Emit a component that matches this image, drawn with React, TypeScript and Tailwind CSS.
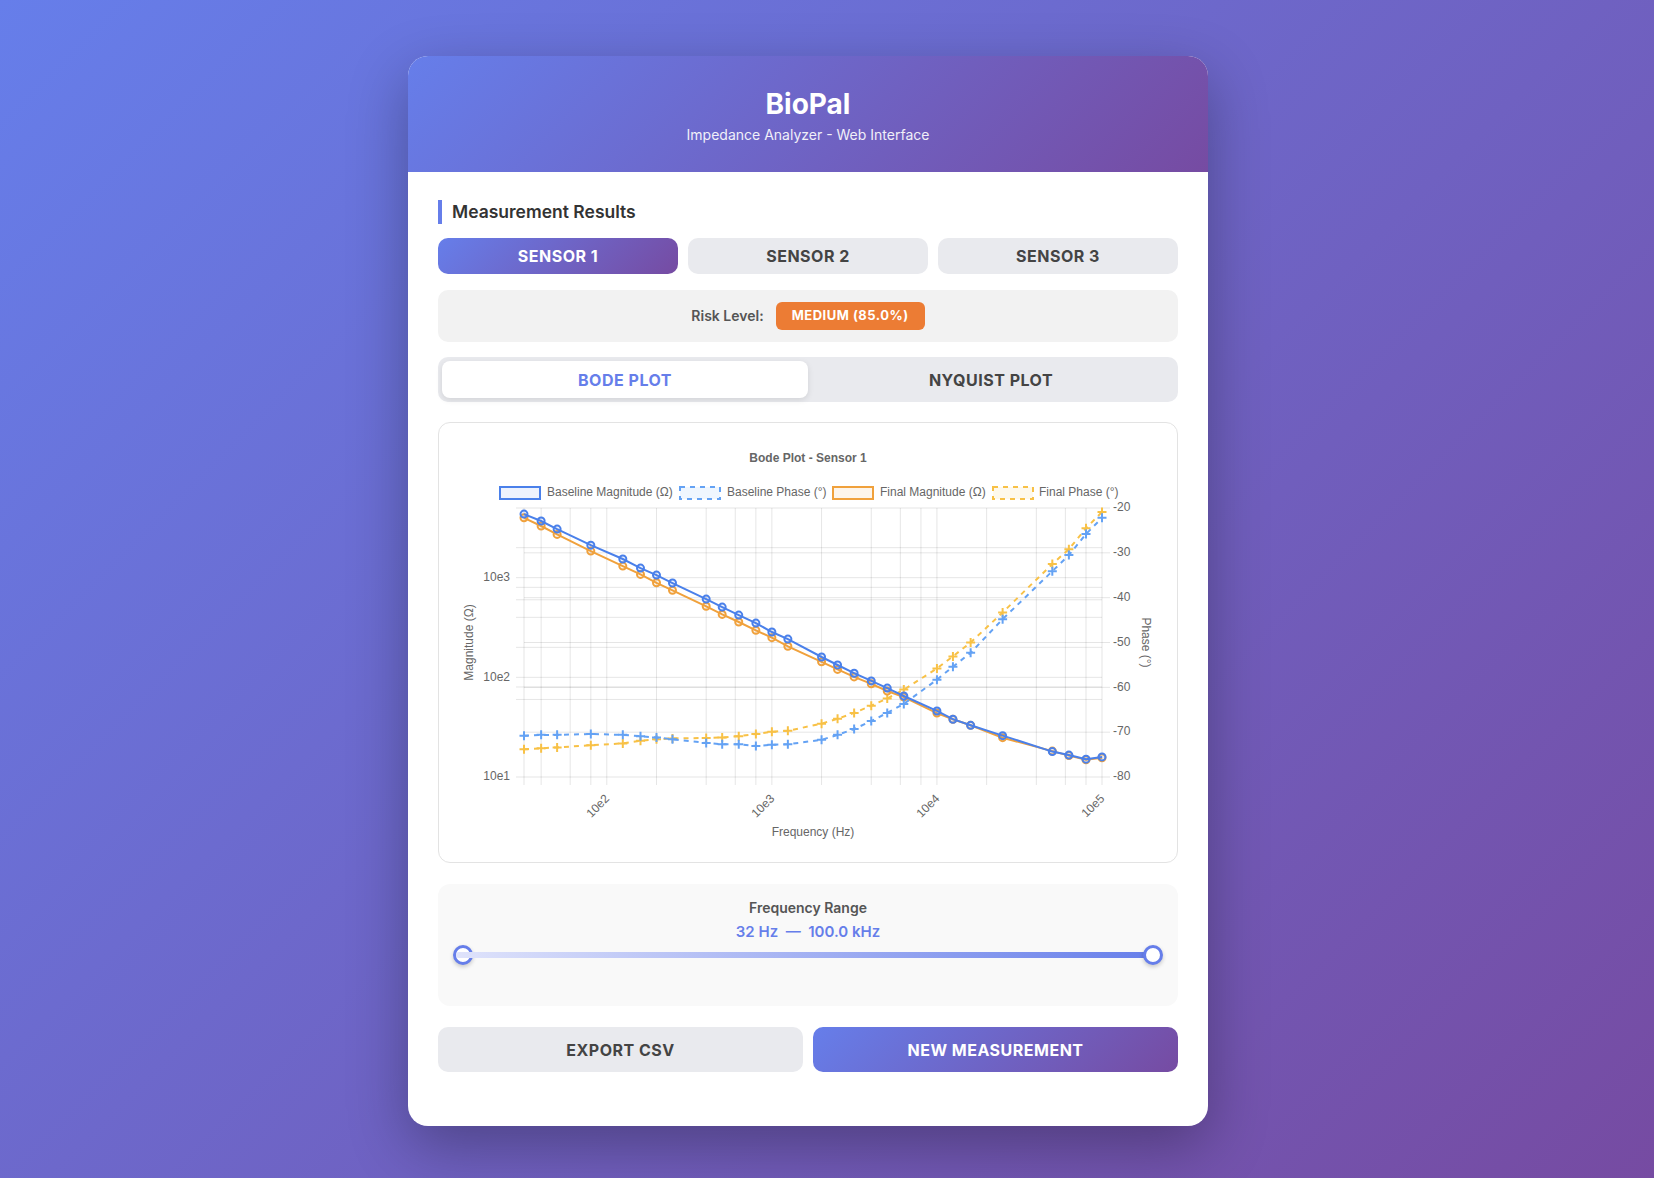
import { useState } from "react";

const FREQS = [
  31.5, 40, 50, 80, 125, 160, 200, 250, 400, 500, 630, 800, 1000, 1250, 2000,
  2500, 3150, 4000, 5000, 6300, 10000, 12500, 16000, 25000, 50000, 63000,
  80000, 100000,
];

const BASE_MAG = [
  4345, 3700, 3070, 2120, 1538, 1248, 1062, 883, 610, 507, 421, 350, 285, 242,
  160, 133, 110, 92, 78, 65, 46, 38, 33, 26, 18, 16.6, 15.1, 15.9,
];
const FINAL_MAG = [
  3990, 3296, 2718, 1849, 1307, 1078, 889, 746, 516, 428, 359, 296, 250, 205,
  143, 120, 101, 86, 73, 63.4, 43.8, 37.9, 33, 24.8, 18.2, 16.4, 14.9, 15.6,
];
const BASE_PHASE = [
  -70.8, -70.6, -70.6, -70.4, -70.6, -70.9, -71.2, -71.6, -72.4, -72.7, -72.7,
  -73.1, -72.8, -72.7, -71.7, -70.6, -69.3, -67.5, -65.7, -63.7, -58.3, -55.4,
  -52.3, -44.8, -34.1, -30.5, -25.8, -22.2,
];
const FINAL_PHASE = [
  -73.8, -73.6, -73.4, -72.9, -72.5, -71.9, -71.6, -71.4, -71.3, -71.2, -70.9,
  -70.4, -69.9, -69.7, -68.1, -67, -65.7, -64.1, -62.5, -60.5, -55.8, -53.1,
  -50, -43.3, -32.5, -29.2, -24.5, -20.9,
];

// chart geometry (svg px)
const W = 698;
const H = 399;
const PL = 65;
const PR = 643;
const PT = 65;
const PB = 334;
const X_MIN = Math.log10(31.5);
const X_MAX = 5;
const Y_MIN = 1;
const Y_MAX = Math.log10(5000);

const fx = (f: number) =>
  PL + ((Math.log10(f) - X_MIN) / (X_MAX - X_MIN)) * (PR - PL);
const fy = (v: number) =>
  PB - ((Math.log10(v) - Y_MIN) / (Y_MAX - Y_MIN)) * (PB - PT);
const fp = (p: number) => PB - ((p + 80) / 60) * (PB - PT);

const GRID = "rgba(0,0,0,0.1)";
const TXT = "#666";
const CHART_FONT = "'Liberation Sans', Arial, Helvetica, sans-serif";

const X_GRID = [
  40, 60, 80, 100, 200, 400, 600, 800, 1000, 2000, 4000, 6000, 8000, 10000,
  20000, 40000, 60000, 80000, 100000,
];
const Y_GRID = [60, 80, 100, 200, 400, 600, 800, 1000, 2000];
const PHASE_TICKS = [-20, -30, -40, -50, -60, -70, -80];

const BLUE = "#4a80ea";
const LIGHT_BLUE = "#64a2f4";
const ORANGE = "#f0a13c";
const YELLOW = "#f8c146";

const SERIES = [
  { name: "Baseline Magnitude (Ω)", color: BLUE, fill: "rgba(74,128,234,0.1)", dashed: false },
  { name: "Baseline Phase (°)", color: LIGHT_BLUE, fill: "rgba(100,162,244,0.1)", dashed: true },
  { name: "Final Magnitude (Ω)", color: ORANGE, fill: "rgba(240,161,60,0.1)", dashed: false },
  { name: "Final Phase (°)", color: YELLOW, fill: "rgba(248,193,70,0.1)", dashed: true },
];
const LEGEND_BOX_X = [41, 221, 374, 534];
const LEGEND_TEXT_X = [88, 268, 421, 580];

function linePath(pts: [number, number][]) {
  return pts.map(([x, y], i) => `${i ? "L" : "M"}${x.toFixed(1)},${y.toFixed(1)}`).join(" ");
}

function MagnitudeSeries({ values, color, fill }: { values: number[]; color: string; fill: string }) {
  const pts = values.map((v, i) => [fx(FREQS[i]), fy(v)] as [number, number]);
  return (
    <g>
      <path d={linePath(pts)} fill="none" stroke={color} strokeWidth={2} />
      {pts.map(([x, y], i) => (
        <circle key={i} cx={x} cy={y} r={3.5} fill={fill} stroke={color} strokeWidth={2} />
      ))}
    </g>
  );
}

function PhaseSeries({ values, color }: { values: number[]; color: string }) {
  const pts = values.map((v, i) => [fx(FREQS[i]), fp(v)] as [number, number]);
  return (
    <g>
      <path d={linePath(pts)} fill="none" stroke={color} strokeWidth={2} strokeDasharray="5 5" />
      {pts.map(([x, y], i) => (
        <path
          key={i}
          d={`M${x - 4.5},${y} L${x + 4.5},${y} M${x},${y - 4.5} L${x},${y + 4.5}`}
          stroke={color}
          strokeWidth={2}
        />
      ))}
    </g>
  );
}

function BodeChart() {
  return (
    <svg width={W} height={H} viewBox={`0 0 ${W} ${H}`} style={{ fontFamily: CHART_FONT }}>
      <text x={349} y={16} textAnchor="middle" dominantBaseline="middle" fontSize={12} fontWeight="bold" fill={TXT}>
        Bode Plot - Sensor 1
      </text>

      {SERIES.map((s, i) => (
        <g key={s.name}>
          <rect
            x={LEGEND_BOX_X[i]}
            y={44}
            width={40}
            height={12}
            fill={s.fill}
            stroke={s.color}
            strokeWidth={2}
            strokeDasharray={s.dashed ? "5 5" : undefined}
          />
          <text x={LEGEND_TEXT_X[i]} y={50} dominantBaseline="middle" fontSize={12} fill={TXT}>
            {s.name}
          </text>
        </g>
      ))}

      {/* grid */}
      {X_GRID.map((f) => (
        <line key={f} x1={fx(f)} x2={fx(f)} y1={PT} y2={PB + 8} stroke={GRID} />
      ))}
      <line x1={PL} x2={PL} y1={PT} y2={PB + 8} stroke={GRID} />
      {Y_GRID.map((v) => (
        <line key={v} x1={PL - 8} x2={PR} y1={fy(v)} y2={fy(v)} stroke={GRID} />
      ))}
      {PHASE_TICKS.map((p) => (
        <line key={p} x1={PL} x2={PR + 8} y1={fp(p)} y2={fp(p)} stroke={GRID} />
      ))}
      <line x1={PL - 8} x2={PL} y1={PB} y2={PB} stroke={GRID} />
      <line x1={PL - 8} x2={PL} y1={PT} y2={PT} stroke={GRID} />

      {/* left axis */}
      {[10, 100, 1000].map((v, i) => (
        <text key={v} x={51} y={fy(v)} textAnchor="end" dominantBaseline="middle" fontSize={12} fill={TXT}>
          {`10e${i + 1}`}
        </text>
      ))}
      <text
        x={11}
        y={(PT + PB) / 2}
        textAnchor="middle"
        dominantBaseline="middle"
        fontSize={12}
        fill={TXT}
        transform={`rotate(-90 11 ${(PT + PB) / 2})`}
      >
        Magnitude (Ω)
      </text>

      {/* right axis */}
      {PHASE_TICKS.map((p) => (
        <text key={p} x={654} y={fp(p)} dominantBaseline="middle" fontSize={12} fill={TXT}>
          {p}
        </text>
      ))}
      <text
        x={686}
        y={(PT + PB) / 2}
        textAnchor="middle"
        dominantBaseline="middle"
        fontSize={12}
        fill={TXT}
        transform={`rotate(90 686 ${(PT + PB) / 2})`}
      >
        Phase (°)
      </text>

      {/* x axis */}
      {[100, 1000, 10000, 100000].map((f, i) => {
        const x = fx(f) + 1;
        return (
          <text
            key={f}
            x={x}
            y={354}
            textAnchor="end"
            dominantBaseline="middle"
            fontSize={12}
            fill={TXT}
            transform={`rotate(-45 ${x} 354)`}
          >
            {`10e${i + 2}`}
          </text>
        );
      })}
      <text x={(PL + PR) / 2} y={390} textAnchor="middle" dominantBaseline="middle" fontSize={12} fill={TXT}>
        Frequency (Hz)
      </text>

      {/* datasets, first one drawn last */}
      <PhaseSeries values={FINAL_PHASE} color={YELLOW} />
      <MagnitudeSeries values={FINAL_MAG} color={ORANGE} fill="rgba(240,161,60,0.1)" />
      <PhaseSeries values={BASE_PHASE} color={LIGHT_BLUE} />
      <MagnitudeSeries values={BASE_MAG} color={BLUE} fill="rgba(74,128,234,0.1)" />
    </svg>
  );
}

function FrequencyRange() {
  return (
    <div className="rounded-xl bg-[#f9f9f9] px-[15px] pt-[15px] pb-[39px]">
      <div className="text-center text-sm leading-[18px] font-semibold text-[#555]">Frequency Range</div>
      <div className="mt-1 text-center text-[15px] leading-[22px] font-semibold text-[#667eea]">
        32 Hz &nbsp;—&nbsp; 100.0 kHz
      </div>
      <div className="relative h-6">
        <div className="absolute left-0 top-[2px] h-5 w-5 rounded-full border-[3px] border-[#667eea] bg-white shadow-[0_2px_4px_rgba(0,0,0,0.2)]" />
        <div className="absolute left-[3px] right-[3px] top-[9px] h-1.5 rounded-full bg-[linear-gradient(90deg,#dfe3fb_0%,#667eea_100%)]" />
        <div className="absolute right-0 top-[2px] h-5 w-5 rounded-full border-[3px] border-[#667eea] bg-white shadow-[0_2px_4px_rgba(0,0,0,0.2)]" />
      </div>
    </div>
  );
}

export default function App() {
  const [sensor, setSensor] = useState(0);
  const [plot, setPlot] = useState<"bode" | "nyquist">("bode");

  return (
    <div className="min-h-screen flex items-center justify-center pt-1 pr-[38px] bg-[linear-gradient(135deg,#667eea_0%,#764ba2_100%)] font-['Inter',sans-serif]">
      <div className="w-[800px] overflow-hidden rounded-[20px] bg-white shadow-[0_20px_60px_rgba(0,0,0,0.3)]">
        <header className="bg-[linear-gradient(135deg,#667eea_0%,#764ba2_100%)] pt-8 pb-[27px] text-center text-white">
          <h1 className="text-[28px] leading-8 font-bold">BioPal</h1>
          <p className="mt-[5px] text-sm leading-5 opacity-90">Impedance Analyzer - Web Interface</p>
        </header>

        <main className="px-[30px] pt-7 pb-[54px]">
          <h2 className="mb-[14px] border-l-4 border-[#667eea] pl-2.5 text-[17.5px] leading-6 font-semibold text-[#333]">
            Measurement Results
          </h2>

          <div className="mb-4 grid grid-cols-3 gap-2.5">
            {["Sensor 1", "Sensor 2", "Sensor 3"].map((s, i) => (
              <button
                key={s}
                type="button"
                onClick={() => setSensor(i)}
                className={
                  sensor === i
                    ? "h-9 rounded-[10px] bg-[linear-gradient(135deg,#667eea_0%,#764ba2_100%)] text-base font-bold tracking-[0.5px] text-white uppercase"
                    : "h-9 rounded-[10px] bg-[#e9eaee] text-base font-bold tracking-[0.5px] text-[#444] uppercase"
                }
              >
                {s}
              </button>
            ))}
          </div>

          <div className="mb-[15px] flex items-center justify-center gap-3 rounded-[10px] bg-[#f2f2f2] py-3">
            <span className="text-sm font-semibold text-[#555]">Risk Level:</span>
            <span className="flex h-7 items-center rounded-md bg-[#ec7c34] px-4 text-[13px] font-bold tracking-[0.5px] text-white">
              MEDIUM (85.0%)
            </span>
          </div>

          <div className="mb-5 grid grid-cols-2 rounded-[10px] bg-[#e9eaee] p-1">
            <button
              type="button"
              onClick={() => setPlot("bode")}
              className={
                plot === "bode"
                  ? "h-[37px] rounded-lg bg-white text-base font-bold tracking-[0.5px] text-[#667eea] shadow-[0_2px_6px_rgba(0,0,0,0.1)]"
                  : "h-[37px] rounded-lg text-base font-bold tracking-[0.5px] text-[#444]"
              }
            >
              BODE PLOT
            </button>
            <button
              type="button"
              onClick={() => setPlot("nyquist")}
              className={
                plot === "nyquist"
                  ? "h-[37px] rounded-lg bg-white text-base font-bold tracking-[0.5px] text-[#667eea] shadow-[0_2px_6px_rgba(0,0,0,0.1)]"
                  : "h-[37px] rounded-lg text-base font-bold tracking-[0.5px] text-[#444]"
              }
            >
              NYQUIST PLOT
            </button>
          </div>

          <div className="mb-[21px] rounded-xl border border-[#e3e3e3] p-5">
            <BodeChart />
          </div>

          <div className="mb-[21px]">
            <FrequencyRange />
          </div>

          <div className="grid grid-cols-2 gap-2.5">
            <button type="button" className="h-[45px] rounded-[10px] bg-[#e9eaee] text-base font-bold tracking-[0.5px] text-[#444]">
              EXPORT CSV
            </button>
            <button
              type="button"
              className="h-[45px] rounded-[10px] bg-[linear-gradient(135deg,#667eea_0%,#764ba2_100%)] text-base font-bold tracking-[0.5px] text-white"
            >
              NEW MEASUREMENT
            </button>
          </div>
        </main>
      </div>
    </div>
  );
}
